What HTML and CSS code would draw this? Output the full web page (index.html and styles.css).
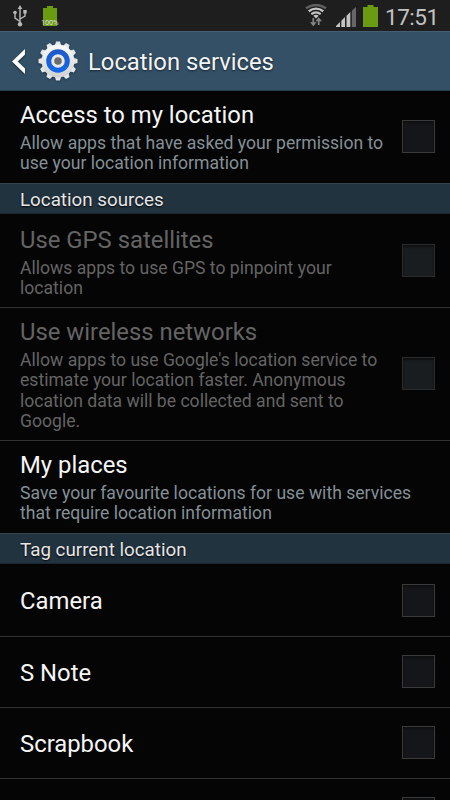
FILE: index.html
```html
<!DOCTYPE html>
<html lang="en">
<head>
<meta charset="utf-8">
<title>Location services</title>
<link rel="stylesheet" href="styles.css">
</head>
<body>
<div class="screen">
  <div class="status">
    <svg class="usb" width="16" height="22" viewBox="0 0 16 22" fill="none" stroke="#b8b8b8" stroke-width="1.4"><path d="M8 3v16M8 16.500l-5-3.300V8.500M8 14l5-3V7.500"/><path d="M8 0l2.300 4H5.700zM11.300 5h3.400v3.400h-3.400z" fill="#b8b8b8" stroke="none"/><circle cx="3" cy="7.500" r="1.800" fill="#b8b8b8" stroke="none"/><circle cx="8" cy="19.300" r="2.200" fill="#b8b8b8" stroke="none"/></svg>
    <div class="charge"><svg width="14" height="20" viewBox="0 0 14 20"><path d="M0 2h4V0h6v2h4v18H0z" fill="#6a9b10"/></svg><span class="percent">100%</span></div>
    <div class="spacer"></div>
    <svg class="wifi" width="22" height="23" viewBox="0 0 22 23" fill="none"><path d="M1 4.300Q11-2.300 21 4.300" stroke="#606060" stroke-width="2.500"/><path d="M3.700 7.300Q11 2 18.300 7.300M6.300 10.200Q11 6.600 15.700 10.200" stroke="#c4c4c4" stroke-width="2.300"/><path d="M8.300 11.800Q11 9.700 13.700 11.800L11 14.500z" fill="#c4c4c4"/><path d="M8.300 14v6M13.700 21v-6" stroke="#858585" stroke-width="1.700"/><path d="M5 18.300h6.600l-3.300 4zM10.400 17.300H17l-3.300-4z" fill="#858585"/></svg>
    <svg class="signal" width="21" height="20" viewBox="0 0 21 20"><path d="M0 20v-1l4-4v5zM5.300 20v-6.300l3.700-3.700v10zM10.500 20V8.700L14.300 5v15z" fill="#c4c4c4"/><path d="M15.800 20V3.700L20 0v20z" fill="#666"/></svg>
    <svg class="battery" width="15" height="22" viewBox="0 0 15 22"><path d="M0 2h4.500V0h6v2H15v20H0z" fill="#6a9b10"/></svg>
    <span class="clock">17:51</span>
  </div>
  <header class="bar">
    <svg class="back" width="14" height="25" viewBox="0 0 14 25"><path d="M13 0v5.500L5.700 12.500 13 19.500V25L0 12.500z" fill="#fff"/></svg>
    <svg class="gear" width="40" height="40" viewBox="-20 -20 40 40">
      <defs>
        <linearGradient id="metal" x1="0" y1="0" x2="0" y2="1"><stop offset="0" stop-color="#fafafa"/><stop offset="1" stop-color="#cfd1d3"/></linearGradient>
        <linearGradient id="blue" x1="0" y1="0" x2="0" y2="1"><stop offset="0" stop-color="#2059c8"/><stop offset="1" stop-color="#1268ea"/></linearGradient>
        <path id="tooth" d="M-3.300-15L-2-19.500H2L3.300-15z"/>
      </defs>
      <g fill="#e5e6e7">
        <use href="#tooth"/><use href="#tooth" transform="rotate(30)"/><use href="#tooth" transform="rotate(60)"/><use href="#tooth" transform="rotate(90)"/><use href="#tooth" transform="rotate(120)"/><use href="#tooth" transform="rotate(150)"/><use href="#tooth" transform="rotate(180)"/><use href="#tooth" transform="rotate(210)"/><use href="#tooth" transform="rotate(240)"/><use href="#tooth" transform="rotate(270)"/><use href="#tooth" transform="rotate(300)"/><use href="#tooth" transform="rotate(330)"/>
      </g>
      <circle r="16.500" fill="url(#metal)"/>
      <circle r="11.800" fill="url(#blue)"/>
      <circle r="5.300" fill="#6c6c6c" stroke="#e8e8e8" stroke-width="3"/>
    </svg>
    <h1>Location services</h1>
  </header>
  <section class="row tall">
    <div><h2>Access to my location</h2><p>Allow apps that have asked your permission to<br>use your location information</p></div>
    <i class="box"></i>
  </section>
  <h3>Location sources</h3>
  <section class="row gps line off">
    <div><h2>Use GPS satellites</h2><p>Allows apps to use GPS to pinpoint your<br>location</p></div>
    <i class="box"></i>
  </section>
  <section class="row wireless line off">
    <div><h2>Use wireless networks</h2><p>Allow apps to use Google's location service to<br>estimate your location faster. Anonymous<br>location data will be collected and sent to<br>Google.</p></div>
    <i class="box"></i>
  </section>
  <section class="row tall">
    <div><h2>My places</h2><p>Save your favourite locations for use with services<br>that require location information</p></div>
  </section>
  <h3>Tag current location</h3>
  <section class="row single first line"><h2>Camera</h2><i class="box"></i></section>
  <section class="row single line"><h2>S Note</h2><i class="box"></i></section>
  <section class="row single line"><h2>Scrapbook</h2><i class="box"></i></section>
  <section class="row single"><h2></h2><i class="box"></i></section>
</div>
</body>
</html>
```
FILE: styles.css
```css
* { box-sizing: border-box; }
body { margin: 0; background: #050505; font-family: Roboto, sans-serif; }
h1, h2, h3, p { margin: 0; font-weight: 400; white-space: nowrap; }
svg { display: block; flex: none; }
.screen { width: 450px; height: 800px; overflow: hidden; display: flex; flex-direction: column; background: #050505; }
.screen > * { flex: none; }
.status { height: 31px; background: #1e1e1e; display: flex; align-items: flex-start; }
.usb { margin: 5px 0 0 12px; }
.charge { position: relative; margin: 6px 0 0 15px; }
.percent { position: absolute; left: -2px; top: 13px; font-size: 7.500px; line-height: 8px; letter-spacing: -.2px; color: #ddd; }
.spacer { flex: 1; }
.wifi { margin: 4px 9px 0 0; }
.signal { margin: 7px 6px 0 0; }
.battery { margin: 5px 7px 0 0; }
.clock { width: 65px; font-size: 22.500px; line-height: 27px; padding-top: 4px; color: #c2c2c2; letter-spacing: -.5px; }
.bar { height: 60px; background: #335066; border-top: 1px solid #435f70; border-bottom: 1px solid #263e4e; display: flex; align-items: center; }
.back { margin-left: 12px; filter: drop-shadow(0 1px 1px #182b38); }
.gear { margin-left: 12px; filter: drop-shadow(0 1px 1px #20394b); }
h1 { margin-left: 10px; font-size: 23.800px; line-height: 28px; color: #f4f4f4; text-shadow: 0 1px 2px #162530; padding-top: 2px; }
.row { display: flex; justify-content: space-between; padding: 0 15px 0 20px; }
.row > div { padding-top: 9px; }
.tall { height: 92px; }
.gps { height: 94px; }
.gps > div { padding-top: 11px; }
.wireless { height: 133px; }
.single { height: 71px; align-items: center; }
.first { height: 73px; }
.line { border-bottom: 1px solid #303030; }
h2 { font-size: 23.850px; line-height: 30px; color: #f5f5f5; }
p { font-size: 17.600px; line-height: 20.400px; color: #849097; margin-top: 3px; }
.off h2, .off p { color: #646464; }
.off .box { background: #1a1d20; border-color: #2b2b2b; }
.box { align-self: center; width: 33px; height: 33px; flex: none; background: #15161a; border: 1.500px solid #3a3a3a; box-shadow: inset 0 2px 2px #0e0f11; }
.tall .box { margin-bottom: 1px; }
.wireless .box, .single:not(.first) .box { margin-bottom: 2px; }
.single h2 { padding-top: 2px; }
h3 { height: 31px; padding: 1px 0 0 20px; background: #223340; border-top: 1px solid #35434d; border-bottom: 1px solid #1a2730; font-size: 18.800px; line-height: 30px; color: #e6e6e6; text-shadow: 0 1px 2px #000; }
```
